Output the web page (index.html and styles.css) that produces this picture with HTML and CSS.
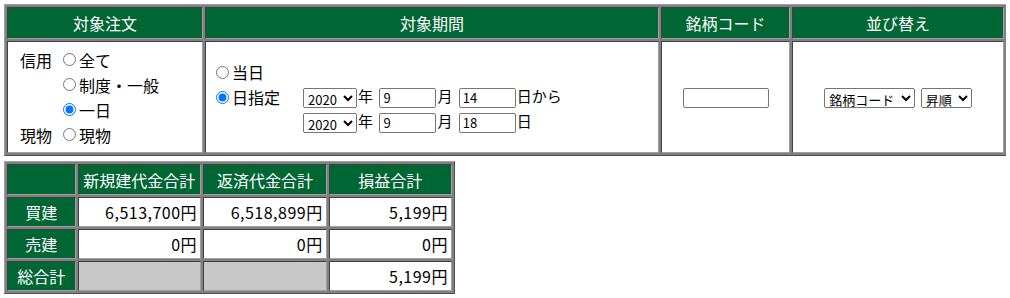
FILE: index.html
```html
<!DOCTYPE html>
<html lang="ja">
<head>
  <meta charset="UTF-8">
  <title>注文照会</title>
  <link rel="stylesheet" href="styles.css">
</head>
<body>
  <table class="grid cond">
    <tr>
      <th class="w-order">対象注文</th>
      <th class="w-period">対象期間</th>
      <th class="w-code">銘柄コード</th>
      <th class="w-sort">並び替え</th>
    </tr>
    <tr>
      <td class="order">
        <table class="inner">
          <tr><td class="kind">信用</td><td><label><input type="radio" name="kind">全て</label></td></tr>
          <tr><td></td><td><label><input type="radio" name="kind">制度・一般</label></td></tr>
          <tr><td></td><td><label><input type="radio" name="kind" checked>一日</label></td></tr>
          <tr><td class="kind">現物</td><td><label><input type="radio" name="kind">現物</label></td></tr>
        </table>
      </td>
      <td class="period">
        <table class="inner">
          <tr><td colspan="2"><label><input type="radio" name="period">当日</label></td></tr>
          <tr>
            <td class="pick"><label><input type="radio" name="period" checked>日指定</label></td>
            <td class="date">
              <select class="year"><option>2020</option></select>年
              <input type="text" value="9">月
              <input type="text" value="14">日から
            </td>
          </tr>
          <tr>
            <td></td>
            <td class="date">
              <select class="year"><option>2020</option></select>年
              <input type="text" value="9">月
              <input type="text" value="18">日
            </td>
          </tr>
        </table>
      </td>
      <td class="center">
        <input type="text" class="code">
      </td>
      <td class="center">
        <select class="sort-key"><option>銘柄コード</option></select>
        <select class="sort-dir"><option>昇順</option></select>
      </td>
    </tr>
  </table>

  <table class="grid totals">
    <tr>
      <th class="w-label"></th>
      <th class="w-num">新規建代金合計</th>
      <th class="w-num">返済代金合計</th>
      <th class="w-num">損益合計</th>
    </tr>
    <tr>
      <th>買建</th>
      <td>6,513,700円</td>
      <td>6,518,899円</td>
      <td>5,199円</td>
    </tr>
    <tr>
      <th>売建</th>
      <td>0円</td>
      <td>0円</td>
      <td>0円</td>
    </tr>
    <tr>
      <th>総合計</th>
      <td class="blank"></td>
      <td class="blank"></td>
      <td>5,199円</td>
    </tr>
  </table>
</body>
</html>
```

FILE: styles.css
```css
body {
  margin: 4px;
  font-family: "Noto Sans CJK JP", "Noto Sans", sans-serif;
  font-size: 16px;
  color: #000;
  background-color: #fff;
}

.grid {
  border: 1px solid;
  border-color: #a0a0a0 #505050 #505050 #a0a0a0;
  border-spacing: 2px;
  background-color: #808080;
}

.grid > tbody > tr > th,
.grid > tbody > tr > td {
  box-sizing: border-box;
  border: 1px solid;
  border-color: #404040 #a0a0a0 #a0a0a0 #404040;
  line-height: 20px;
}

.grid th {
  background-color: #006633;
  color: #fff;
  font-weight: normal;
  padding: 5px 4px;
}

.grid td {
  background-color: #fff;
}

/* top table */
.cond {
  width: 1003px;
}

.w-order { width: 196px; }
.w-period { width: 454px; }
.w-code { width: 129px; }
.w-sort { width: 212px; }

.cond > tbody > tr > td {
  height: 112px;
  vertical-align: middle;
}

.inner {
  border-collapse: collapse;
}

.inner td {
  padding: 0;
  height: 25px;
  white-space: nowrap;
}

.inner label {
  display: inline-flex;
  align-items: center;
}

.inner input[type="radio"] {
  margin: 0 3px 0 5px;
}

.order .inner {
  margin-left: 11px;
}

.kind {
  width: 38px;
}

.period .inner {
  margin-left: 4px;
}

.pick {
  width: 92px;
}

.date {
  font-size: 15px;
}

.date select,
.date input,
.center input,
.center select {
  font-family: "Noto Sans CJK JP", "Noto Sans", sans-serif;
  font-size: 13px;
  box-sizing: border-box;
  height: 20px;
  vertical-align: middle;
}

.date input,
.center input {
  border: 1px solid #767676;
  border-radius: 2px;
  padding: 0 3px;
}

.date input {
  width: 57px;
  margin: 0 1px 0 3px;
}

.year {
  width: 54px;
  padding: 0;
  margin-right: 1px;
}

.center {
  text-align: center;
}

.code {
  width: 86px;
}

.sort-key {
  width: 91px;
  font-size: 14px;
  padding: 0;
}

.sort-dir {
  width: 51px;
  font-size: 14px;
  padding: 0;
  margin-left: 2px;
}

/* bottom table */
.totals {
  margin-top: 5px;
  width: 451px;
}

.w-label { width: 69px; }
.w-num { width: 124px; }

.totals > tbody > tr > th {
  padding: 4px 2px;
  height: 30px;
}

.totals > tbody > tr > td {
  text-align: right;
  padding: 4px 3px;
  height: 30px;
  letter-spacing: 0.5px;
}

.totals > tbody > tr:first-child > th {
  height: 31px;
}

.totals td.blank {
  background-color: #c8c8c8;
}
```
